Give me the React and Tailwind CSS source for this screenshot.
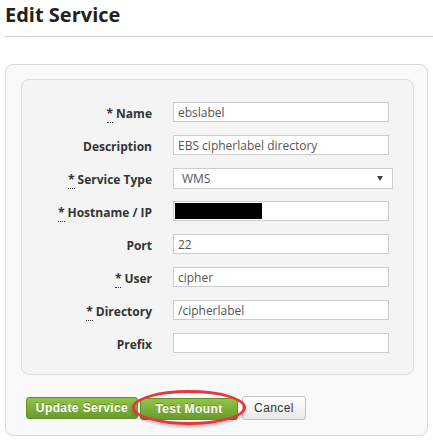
import React from 'react';

const fields = [
    {label: 'Name', required: true, value: 'ebslabel'},
    {label: 'Description', value: 'EBS cipherlabel directory'},
    {label: 'Service Type', required: true, select: 'WMS'},
    {label: 'Hostname / IP', required: true, redacted: true},
    {label: 'Port', value: '22'},
    {label: 'User', required: true, value: 'cipher'},
    {label: 'Directory', required: true, value: '/cipherlabel'},
    {label: 'Prefix', value: ''},
];

const Req = () => (
    <abbr title="required" className="no-underline border-b border-dotted border-[#333] mr-[3px]">*</abbr>
);

const Field = ({f}) => (
    <div className="flex items-start h-[20px]">
        <label className="w-[130px] text-right text-[12px] font-bold text-[#333] leading-[20px] pt-[2px]">
            {f.required && <Req />}
            {f.label}
        </label>
        <div className="ml-[21px]">
            {f.select ? (
                <div className="w-[220px] h-[21px] bg-white border border-[#ccc] flex items-center justify-between pl-[8px] pr-[9px] text-[12px] text-[#555]">
                    <span>{f.select}</span>
                    <span className="w-0 h-0 border-l-[3px] border-r-[3px] border-t-[5px] border-l-transparent border-r-transparent border-t-[#444]" />
                </div>
            ) : f.redacted ? (
                <div className="w-[216px] h-[20px] bg-white border border-[#ccc] p-[1px]">
                    <div className="w-[87px] h-full bg-black" />
                </div>
            ) : (
                <input
                    readOnly
                    defaultValue={f.value}
                    className="block w-[216px] h-[20px] bg-white border border-[#ccc] px-[4px] text-[12px] text-[#555] outline-none"
                />
            )}
        </div>
    </div>
);

const App = () => {
    return (
        <div className="w-[433px] h-[440px] bg-white font-['Open_Sans',sans-serif] pl-[5px] overflow-hidden">
            <h1 className="text-[20px] font-bold text-[#222] leading-[30px]">Edit Service</h1>
            <hr className="border-0 border-t border-[#ccc] mt-[6px]" />

            <div className="mt-[27px] w-[423px] bg-[#f9f9f9] border border-[#d8d8d8] rounded-[8px] pt-[14px] pl-[15px] pb-[15px]">
                <div className="w-[393px] bg-[#f4f4f4] border border-[#dcdcdc] rounded-[8px] pt-[22px] pb-[21px] flex flex-col gap-[13px]">
                    {fields.map((f) => (
                        <Field key={f.label} f={f} />
                    ))}
                </div>

                <div className="mt-[21px] ml-[5px] flex items-center font-['Liberation_Sans',Arial,sans-serif]">
                    <button className="h-[22px] w-[112px] rounded-[3px] border border-[#5f8f25] bg-gradient-to-b from-[#92c447] to-[#689b2b] text-white text-[12px] font-bold tracking-[0.4px] [text-shadow:0_-1px_0_rgba(0,0,0,0.25)]">
                        Update Service
                    </button>
                    <div className="relative ml-[2px]">
                        <button className="h-[22px] w-[98px] rounded-[3px] border border-[#5f8f25] bg-gradient-to-b from-[#92c447] to-[#689b2b] text-white text-[12px] font-bold tracking-[0.4px] [text-shadow:0_-1px_0_rgba(0,0,0,0.25)]">
                            Test Mount
                        </button>
                        <div className="absolute -left-[8px] -right-[8px] -top-[6px] -bottom-[5px] rounded-[50%] border-[3px] border-[#e8363c] shadow-[0_2px_3px_rgba(0,0,0,0.25)] pointer-events-none" />
                    </div>
                    <button className="ml-[4px] h-[24px] w-[64px] rounded-[3px] border border-[#c4c4c4] bg-gradient-to-b from-white to-[#e8e8e8] text-[#333] text-[12px] tracking-[0.4px]">
                        Cancel
                    </button>
                </div>
            </div>
        </div>
    );
};

export default App;
